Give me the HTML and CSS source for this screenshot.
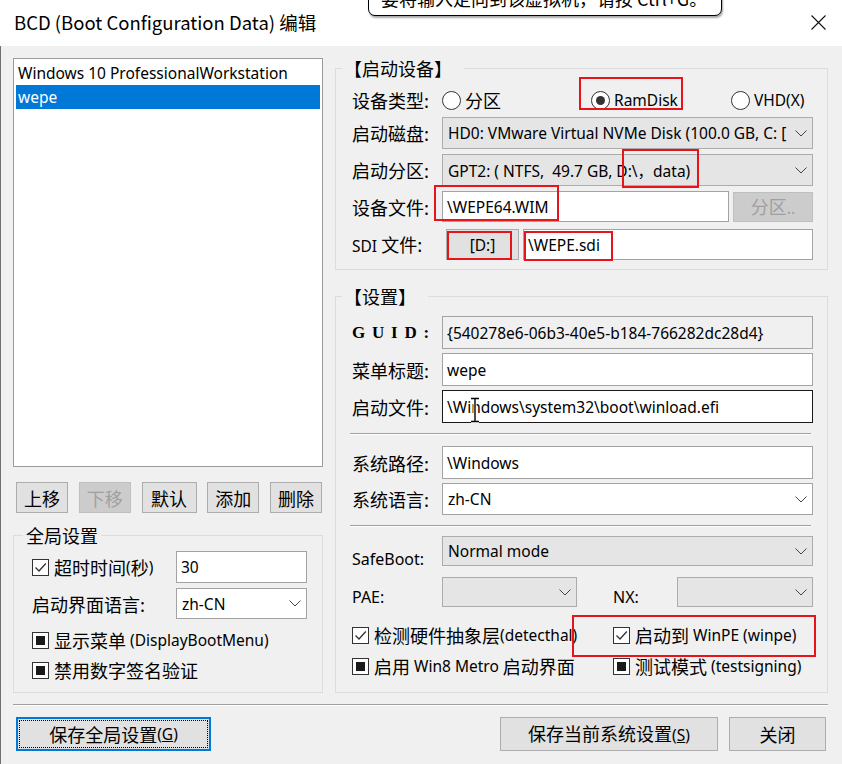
FILE: index.html
```html
<!DOCTYPE html>
<html lang="zh-CN">
<head>
<meta charset="utf-8">
<title>BCD 编辑</title>
<link rel="stylesheet" href="styles.css">
</head>
<body>
<div class="window">
  <header class="titlebar">
    <span class="title">BCD (Boot Configuration Data) 编辑</span>
    <svg class="close" width="15" height="15" viewBox="0 0 15 15"><path d="M0.5 0.5L14.5 14.5M14.5 0.5L0.5 14.5" stroke="#111" stroke-width="1.1" fill="none"/></svg>
  </header>
  <div class="tooltip">要将输入定向到该虚拟机，请按 Ctrl+G。</div>

  <div class="main">
    <div class="leftcol">
      <div class="listbox">
        <div class="item en">Windows 10 ProfessionalWorkstation</div>
        <div class="item sel en">wepe</div>
      </div>
      <div class="btnrow">
        <button class="btn small">上移</button>
        <button class="btn small" disabled>下移</button>
        <button class="btn small wide">默认</button>
        <button class="btn small">添加</button>
        <button class="btn small">删除</button>
      </div>
      <fieldset class="group gglobal">
        <legend>全局设置</legend>
        <div class="gbody">
          <div class="frow h32">
            <label class="chk lcol"><span class="box"><svg width="15" height="15" viewBox="0 0 15 15"><path d="M2.5 7.5L6 11L12.8 3.5" fill="none" stroke="#333" stroke-width="1.3"/></svg></span>超时时间<span class="en">(</span>秒<span class="en">)</span></label>
            <div class="edit fill en">30</div>
          </div>
          <div class="frow h31 mt5">
            <span class="lbl lcol">启动界面语言:</span>
            <div class="combo white fill"><span class="ctext en">zh-CN</span><svg class="chev" width="12" height="7" viewBox="0 0 12 7"><path d="M0.5 0.5L6 6L11.5 0.5" fill="none" stroke="#444" stroke-width="1"/></svg></div>
          </div>
          <div class="frow h24 mt9">
            <label class="chk"><span class="box ind"></span>显示菜单 <span class="en">(DisplayBootMenu)</span></label>
          </div>
          <div class="frow h24 mt6">
            <label class="chk"><span class="box ind"></span>禁用数字签名验证</label>
          </div>
        </div>
      </fieldset>
    </div>

    <div class="rightcol">
      <fieldset class="group gboot">
        <legend>【启动设备】</legend>
        <div class="gbody rb">
          <div class="frow h24">
            <span class="lbl rcol">设备类型:</span>
            <label class="radio r1"><span class="circ"></span>分区</label>
            <label class="radio r2"><span class="circ on"></span><span class="en">RamDisk</span></label>
            <label class="radio"><span class="circ"></span><span class="en">VHD(X)</span></label>
          </div>
          <div class="frow h32 mt5">
            <span class="lbl rcol">启动磁盘:</span>
            <div class="combo fill"><span class="ctext en">HD0: VMware Virtual NVMe Disk (100.0 GB, C: [</span><svg class="chev" width="12" height="7" viewBox="0 0 12 7"><path d="M0.5 0.5L6 6L11.5 0.5" fill="none" stroke="#444" stroke-width="1"/></svg></div>
          </div>
          <div class="frow h32 mt5">
            <span class="lbl rcol">启动分区:</span>
            <div class="combo fill"><span class="ctext en">GPT2: ( NTFS,  49.7 GB, D:\，data)</span><svg class="chev" width="12" height="7" viewBox="0 0 12 7"><path d="M0.5 0.5L6 6L11.5 0.5" fill="none" stroke="#444" stroke-width="1"/></svg></div>
          </div>
          <div class="frow h31 mt5">
            <span class="lbl rcol">设备文件:</span>
            <div class="edit devfile en">\WEPE64.WIM</div>
            <button class="btn part" disabled>分区<span class="en">..</span></button>
          </div>
          <div class="frow h31 mt7">
            <span class="lbl rcol"><span class="en sdi">SDI</span> 文件:</span>
            <button class="btn drive en">[D:]</button>
            <div class="edit fill en">\WEPE.sdi</div>
          </div>
        </div>
      </fieldset>

      <fieldset class="group gset">
        <legend>【设置】</legend>
        <div class="gbody rb">
          <div class="frow h33">
            <span class="lbl rcol guid">GUID:</span>
            <div class="edit fill ro en">{540278e6-06b3-40e5-b184-766282dc28d4}</div>
          </div>
          <div class="frow h33 mt4">
            <span class="lbl rcol">菜单标题:</span>
            <div class="edit fill en">wepe</div>
          </div>
          <div class="frow h33 mt4">
            <span class="lbl rcol">启动文件:</span>
            <div class="edit fill hover en">\Windows\system32\boot\winload.efi</div>
          </div>
          <div class="hsep"></div>
          <div class="frow h33 mt11">
            <span class="lbl rcol">系统路径:</span>
            <div class="edit fill en">\Windows</div>
          </div>
          <div class="frow h32 mt4">
            <span class="lbl rcol">系统语言:</span>
            <div class="combo white fill"><span class="ctext en">zh-CN</span><svg class="chev" width="12" height="7" viewBox="0 0 12 7"><path d="M0.5 0.5L6 6L11.5 0.5" fill="none" stroke="#444" stroke-width="1"/></svg></div>
          </div>
          <div class="hsep"></div>
          <div class="frow h30 mt9">
            <span class="lbl rcol low en big">SafeBoot:</span>
            <div class="combo fill"><span class="ctext en">Normal mode</span><svg class="chev" width="12" height="7" viewBox="0 0 12 7"><path d="M0.5 0.5L6 6L11.5 0.5" fill="none" stroke="#444" stroke-width="1"/></svg></div>
          </div>
          <div class="frow h30 mt11">
            <span class="lbl rcol bottom en big">PAE:</span>
            <div class="combo pae"><span class="ctext"></span><svg class="chev" width="12" height="7" viewBox="0 0 12 7"><path d="M0.5 0.5L6 6L11.5 0.5" fill="none" stroke="#444" stroke-width="1"/></svg></div>
            <span class="lbl nxl bottom en big">NX:</span>
            <div class="combo fill"><span class="ctext"></span><svg class="chev" width="12" height="7" viewBox="0 0 12 7"><path d="M0.5 0.5L6 6L11.5 0.5" fill="none" stroke="#444" stroke-width="1"/></svg></div>
          </div>
          <div class="frow h24 mt16">
            <label class="chk c1"><span class="box"><svg width="15" height="15" viewBox="0 0 15 15"><path d="M2.5 7.5L6 11L12.8 3.5" fill="none" stroke="#333" stroke-width="1.3"/></svg></span>检测硬件抽象层<span class="en">(detecthal)</span></label>
            <label class="chk"><span class="box"><svg width="15" height="15" viewBox="0 0 15 15"><path d="M2.5 7.5L6 11L12.8 3.5" fill="none" stroke="#333" stroke-width="1.3"/></svg></span>启动到 <span class="en">WinPE (winpe)</span></label>
          </div>
          <div class="frow h24 mt7">
            <label class="chk c1"><span class="box ind"></span>启用 <span class="en">Win8 Metro</span> 启动界面</label>
            <label class="chk"><span class="box ind"></span>测试模式 <span class="en">(testsigning)</span></label>
          </div>
        </div>
      </fieldset>
    </div>
  </div>

  <div class="divider"></div>
  <div class="footer">
    <button class="btn fbtn focus"><span class="focusring">保存全局设置<span class="en">(<u>G</u>)</span></span></button>
    <button class="btn fbtn save">保存当前系统设置<span class="en">(<u>S</u>)</span></button>
    <button class="btn fbtn closeb">关闭</button>
  </div>

  <div class="anno a-ram"></div>
  <div class="anno a-data"></div>
  <div class="anno a-wim"></div>
  <div class="anno a-drive"></div>
  <div class="anno a-sdi"></div>
  <div class="anno a-winpe"></div>
  <svg class="ibeam" width="12" height="26" viewBox="0 0 12 26"><path d="M2 1.5H10M6 1.5V24.5M2 24.5H10" fill="none" stroke="#fff" stroke-width="3.2"/><path d="M2 1.5H10M6 1.5V24.5M2 24.5H10" fill="none" stroke="#000" stroke-width="1.4"/></svg>
</div>
</body>
</html>
```

FILE: styles.css
```css
* { box-sizing: border-box; }
html, body { margin: 0; padding: 0; }
body {
  width: 842px;
  height: 764px;
  overflow: hidden;
  background: #f0f0f0;
  font-family: "Noto Sans CJK SC", "Noto Sans", sans-serif;
  font-size: 18px;
  color: #000;
}
.en {
  font-family: "Noto Sans", "Noto Sans CJK SC", sans-serif;
  font-size: 15.5px;
}
.en.big { font-size: 16px; }
.window {
  position: relative;
  width: 842px;
  height: 764px;
  box-shadow: inset 1px 0 0 #707070;
}

/* title bar */
.titlebar {
  height: 46px;
  background: #fff;
  display: flex;
  align-items: center;
  padding-left: 14px;
}
.title { font-size: 18.5px; line-height: 24px; margin-top: -3px; }
.close { margin-left: auto; margin-right: 16px; margin-top: -2px; }

.tooltip {
  position: absolute;
  left: 368px;
  top: -22px;
  width: 354px;
  height: 38px;
  background: #fff;
  border: 1px solid #000;
  border-radius: 0 0 7px 7px;
  box-shadow: 1px 2px 2px rgba(0,0,0,0.35);
  font-size: 18px;
  line-height: 22px;
  padding: 8px 0 0 12px;
  white-space: nowrap;
  overflow: hidden;
}

/* layout */
.main {
  display: flex;
  gap: 12px;
  height: 647px;
  padding: 12px 0 0 13px;
}
.leftcol { width: 310px; display: flex; flex-direction: column; }
.rightcol { width: 493px; display: flex; flex-direction: column; }

/* list */
.listbox {
  height: 409px;
  background: #fff;
  border: 1px solid #9c9c9c;
  padding: 2px;
}
.item { height: 24px; line-height: 24px; padding-left: 2px; white-space: nowrap; }
.item.sel { background: #0078d7; color: #fff; }

/* buttons */
.btn {
  font-family: "Noto Sans CJK SC", "Noto Sans", sans-serif;
  font-size: 18px;
  color: #000;
  background: #e1e1e1;
  border: 1px solid #adadad;
  padding: 0;
  margin: 0;
  line-height: 20px;
}
.btn.en { font-family: "Noto Sans", sans-serif; font-size: 15.5px; }
.btn:disabled { background: #cccccc; border-color: #bfbfbf; color: #a0a0a0; }
.btnrow {
  display: flex;
  justify-content: space-between;
  margin-top: 15px;
  padding: 0 1px 0 3px;
}
.btn.small { width: 52px; height: 31px; }
.btn.small.wide { width: 55px; }

/* group boxes */
fieldset.group {
  margin: 0;
  padding: 0;
  border: 1px solid #dcdcdc;
  min-width: 0;
}
fieldset.group > legend {
  height: 20px;
  line-height: 20px;
  padding: 0 3px;
  margin-left: 9px;
  font-size: 18px;
}
fieldset.gboot > legend, fieldset.gset > legend { margin-left: 6px; padding: 0 12px 0 2px; }
fieldset.gglobal { margin-top: 12px; flex: 1; }
fieldset.gboot { height: 212px; }
fieldset.gset { margin-top: 16px; flex: 1; }

.gbody { padding: 6px 15px 0 18px; }
.gbody.rb { padding: 10px 14px 0 16px; }

.frow { display: flex; align-items: center; }
.h24 { height: 24px; }
.h30 { height: 30px; }
.h31 { height: 31px; }
.h32 { height: 32px; }
.h33 { height: 33px; }
.mt4 { margin-top: 4px; }
.mt5 { margin-top: 5px; }
.mt6 { margin-top: 6px; }
.mt7 { margin-top: 7px; }
.mt9 { margin-top: 9px; }
.mt11 { margin-top: 11px; }
.mt16 { margin-top: 16px; }

.lcol { width: 144px; flex: none; }
.rcol { width: 90px; flex: none; }
.lbl { white-space: nowrap; line-height: 22px; }
.lbl.low { align-self: flex-end; margin-bottom: -4px; }
.lbl.bottom { align-self: flex-end; margin-bottom: -1px; }
.sdi { font-size: 15.5px; }
.guid {
  font-family: "Liberation Serif", "DejaVu Serif", serif;
  font-weight: bold;
  font-size: 17px;
  letter-spacing: 0.4em;
}
.fill { flex: 1; min-width: 0; }

/* edits */
.edit {
  height: 100%;
  background: #fff;
  border: 1px solid #a3a3a3;
  padding-left: 4px;
  display: flex;
  align-items: center;
  white-space: nowrap;
  overflow: hidden;
}
.edit.ro { background: #f0f0f0; }
.edit.hover { border-color: #1a1a1a; }
.edit.devfile { width: 287px; flex: none; }
.btn.part { width: 80px; height: 30px; margin-left: 4px; }
.btn.drive { width: 73px; height: 100%; margin: 0 4px; }

/* combos */
.combo {
  height: 100%;
  background: #e5e5e5;
  border: 1px solid #acacac;
  display: flex;
  align-items: center;
  padding: 0 5px 0 5px;
}
.combo.white { background: #fff; border-color: #a3a3a3; }
.ctext { flex: 1; min-width: 0; white-space: pre; overflow: hidden; }
.chev { flex: none; margin-left: 6px; }
.combo.pae { width: 135px; flex: none; }
.nxl { width: 100px; flex: none; padding-left: 36px; }

/* radios */
.radio { display: flex; align-items: center; white-space: nowrap; }
.radio.r1 { width: 149px; }
.radio.r2 { width: 140px; }
.circ {
  width: 19px;
  height: 19px;
  border: 1.5px solid #333;
  border-radius: 50%;
  background: #fff;
  margin-right: 4px;
  display: flex;
  align-items: center;
  justify-content: center;
  flex: none;
}
.circ.on::after {
  content: "";
  width: 9px;
  height: 9px;
  border-radius: 50%;
  background: #333;
}

/* check boxes */
.chk { display: flex; align-items: center; white-space: pre; }
.chk.c1 { width: 261px; flex: none; }
.box {
  width: 17px;
  height: 17px;
  border: 1px solid #333;
  background: #fff;
  margin-right: 5px;
  flex: none;
  display: flex;
  align-items: center;
  justify-content: center;
}
.box.ind::after {
  content: "";
  width: 9px;
  height: 9px;
  background: #1a1a1a;
}

.hsep {
  height: 2px;
  border-top: 1px solid #a0a0a0;
  border-bottom: 1px solid #fff;
  margin: 10px 2px 0 -2px;
}

/* footer */
.divider {
  height: 2px;
  border-top: 1px solid #a0a0a0;
  border-bottom: 1px solid #fff;
  margin: 11px 14px 0 13px;
}
.footer {
  display: flex;
  padding: 11px 16px 0 16px;
  gap: 11px;
}
.fbtn { height: 34px; }
.fbtn.focus {
  width: 195px;
  border: 2px solid #0078d7;
  padding: 1px;
}
.focusring {
  display: flex;
  align-items: center;
  justify-content: center;
  height: 100%;
  border: 1px dotted #000;
}
.fbtn.save { width: 218px; margin-left: auto; }
.fbtn.closeb { width: 97px; }

/* annotations */
.anno { position: absolute; border: 2px solid #e8141c; }
.a-ram { left: 579px; top: 77px; width: 104px; height: 33px; }
.a-data { left: 622px; top: 149px; width: 77px; height: 39px; }
.a-wim { left: 434px; top: 185px; width: 125px; height: 36px; }
.a-drive { left: 447px; top: 231px; width: 65px; height: 29px; }
.a-sdi { left: 524px; top: 231px; width: 89px; height: 30px; }
.a-winpe { left: 572px; top: 615px; width: 244px; height: 42px; }
.ibeam { position: absolute; left: 469px; top: 397px; }
```
